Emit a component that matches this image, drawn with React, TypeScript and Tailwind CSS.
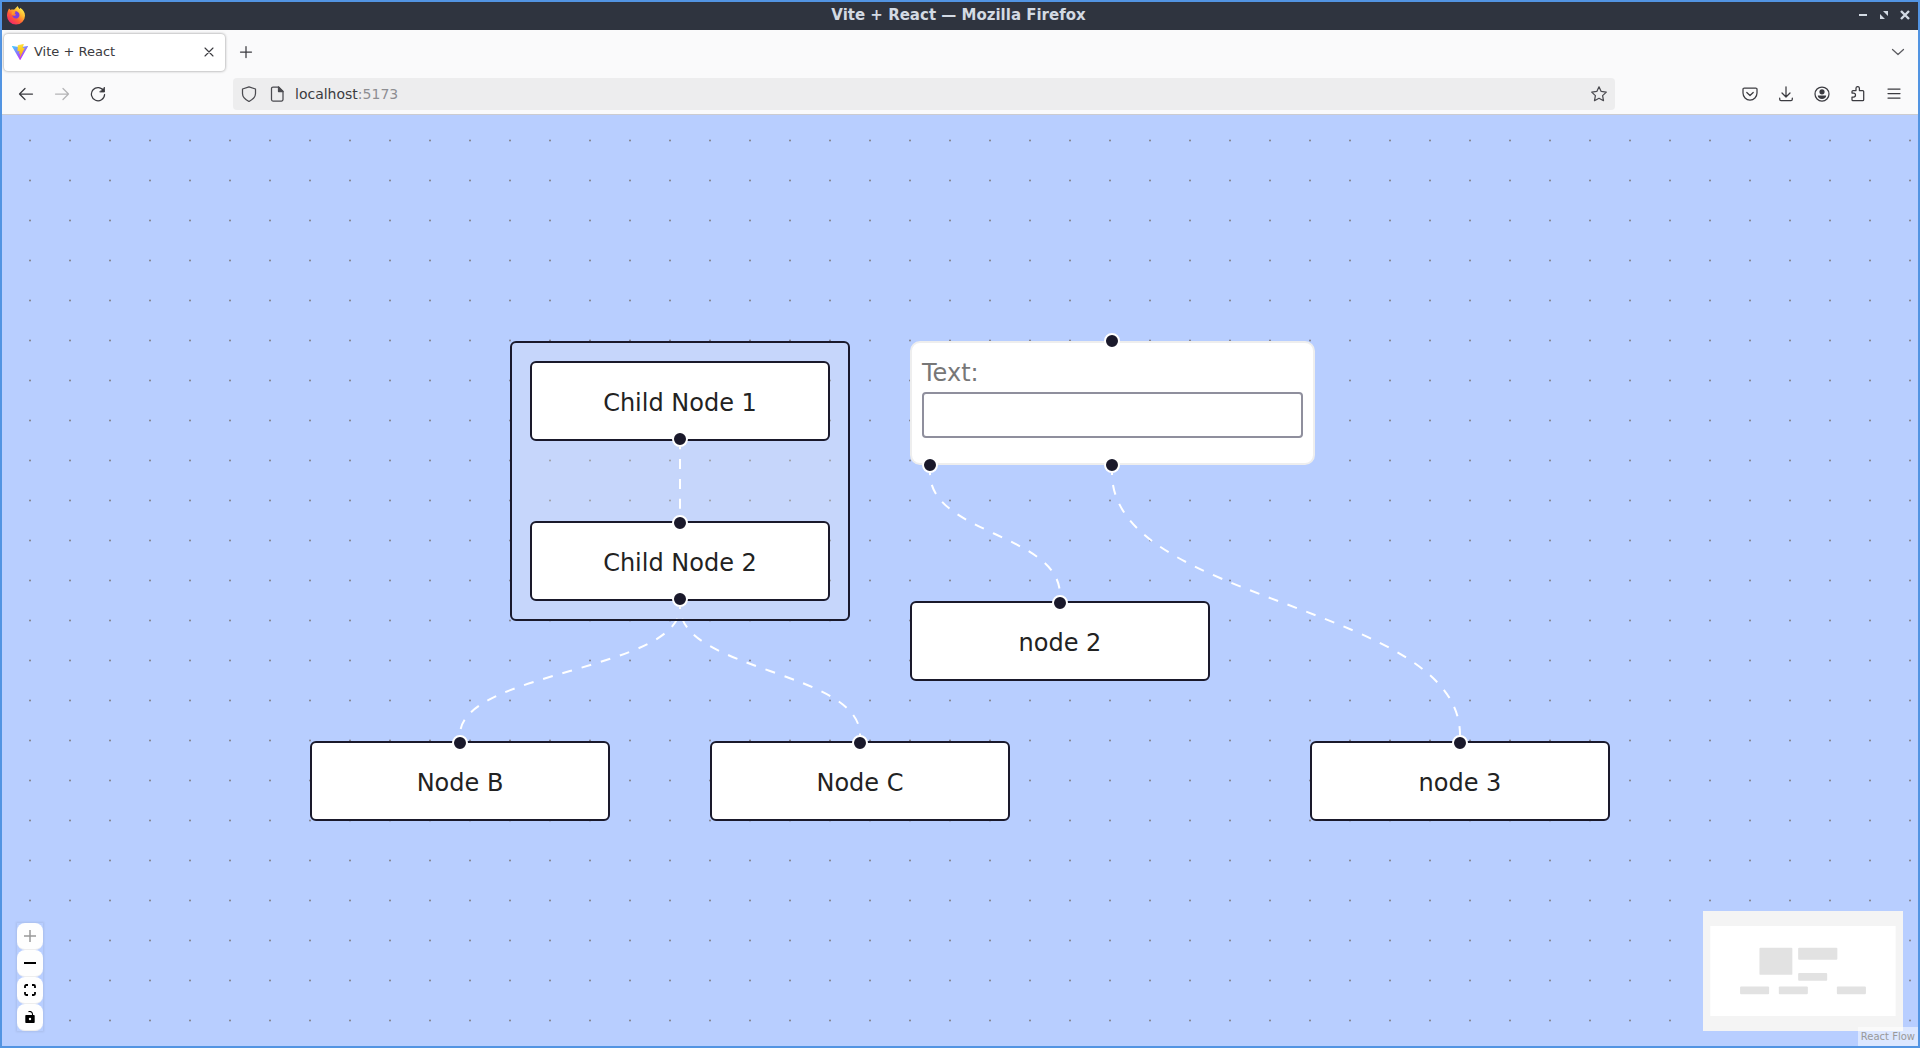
import React from "react";

type Handle = { x: number; y: number };
type FlowNode = { id: string; label: string; x: number; y: number; handles: Handle[] };
type Edge = { from: Handle; to: Handle };

const NODES: FlowNode[] = [
  { id: "child-1", label: "Child Node 1", x: 528, y: 246, handles: [{ x: 150, y: 78 }] },
  { id: "child-2", label: "Child Node 2", x: 528, y: 406, handles: [{ x: 150, y: 2 }, { x: 150, y: 78 }] },
  { id: "node-b", label: "Node B", x: 308, y: 626, handles: [{ x: 150, y: 2 }] },
  { id: "node-c", label: "Node C", x: 708, y: 626, handles: [{ x: 150, y: 2 }] },
  { id: "node-2", label: "node 2", x: 908, y: 486, handles: [{ x: 150, y: 2 }] },
  { id: "node-3", label: "node 3", x: 1308, y: 626, handles: [{ x: 150, y: 2 }] },
];

const LOWER_EDGES: Edge[] = [
  { from: { x: 678, y: 492 }, to: { x: 458, y: 620 } },
  { from: { x: 678, y: 492 }, to: { x: 858, y: 620 } },
  { from: { x: 928, y: 358 }, to: { x: 1058, y: 480 } },
  { from: { x: 1110, y: 358 }, to: { x: 1458, y: 620 } },
];

const GROUP_EDGES: Edge[] = [{ from: { x: 678, y: 332 }, to: { x: 678, y: 400 } }];

const MINIMAP_RECTS = [
  { x: 508, y: 226, w: 340, h: 280 },
  { x: 908, y: 226, w: 405, h: 124 },
  { x: 908, y: 486, w: 300, h: 80 },
  { x: 308, y: 626, w: 300, h: 80 },
  { x: 708, y: 626, w: 300, h: 80 },
  { x: 1308, y: 626, w: 300, h: 80 },
];

function edgePath({ from, to }: Edge) {
  const mid = (from.y + to.y) / 2;
  return `M${from.x},${from.y} C${from.x},${mid} ${to.x},${mid} ${to.x},${to.y}`;
}

function Edges({ edges }: { edges: Edge[] }) {
  return (
    <svg className="pointer-events-none absolute inset-0 h-full w-full" fill="none" stroke="#fff" strokeWidth="2" strokeDasharray="10" strokeDashoffset="8">
      {edges.map((e) => (
        <path key={edgePath(e)} d={edgePath(e)} />
      ))}
    </svg>
  );
}

function HandleDot({ x, y }: Handle) {
  return (
    <span
      className="absolute size-4 -translate-x-1/2 -translate-y-1/2 rounded-full border-2 border-white bg-[#1a192b]"
      style={{ left: x, top: y }}
    />
  );
}

function NodeBox({ node }: { node: FlowNode }) {
  return (
    <div className="absolute" style={{ left: node.x, top: node.y }}>
      <div className="flex h-20 w-[300px] items-center justify-center rounded-md border-2 border-[#1a192b] bg-white pt-[3px] text-2xl text-[#222]">
        {node.label}
      </div>
      {node.handles.map((h) => (
        <HandleDot key={h.y} {...h} />
      ))}
    </div>
  );
}

function TextNode() {
  return (
    <div className="absolute top-[226px] left-[908px]">
      <div className="flex h-[124px] w-[405px] flex-col rounded-[10px] border-2 border-[#eee] bg-white px-2.5 pt-2.5">
        <label htmlFor="text" className="h-[39px] text-2xl leading-10 text-[#777]">
          Text:
        </label>
        <input id="text" name="text" className="h-[46px] w-full rounded-[4px] border-2 border-[#8f8f9d] bg-white px-1 text-2xl outline-none" />
      </div>
      <HandleDot x={202} y={0} />
      <HandleDot x={20} y={124} />
      <HandleDot x={202} y={124} />
    </div>
  );
}

function FirefoxLogo() {
  return (
    <svg viewBox="0 0 20 20" className="size-5">
      <defs>
        <linearGradient id="fx-body" x1="0.85" y1="0.1" x2="0.2" y2="0.95">
          <stop offset="0" stopColor="#fff44f" />
          <stop offset="0.35" stopColor="#ffb02e" />
          <stop offset="0.65" stopColor="#ff5a36" />
          <stop offset="1" stopColor="#f0246e" />
        </linearGradient>
      </defs>
      <path
        fill="url(#fx-body)"
        d="M3 3.4c.7.5 1.2 1 1.5 1.6 1.2-.6 2.5-.6 3.5-.2C9 3.8 10.3 2 11.9.9c.1 1.5 1 2.4 2 3.2.2-.5.2-.9.1-1.4 3.2 1.8 5 4.7 5 8A9 9 0 0 1 10 19.6 9 9 0 0 1 1 10.7C1 8 1.8 5.500 3 3.4Z"
      />
      <path fill="#ff9a2a" d="M6 7c1.5-1.5 4-1.6 5.6-.6l-2.3 1.3c-.3.7-1.6 1-2 1.2-.3.3.1 1.2.1 1.2L5.6 9.6Z" />
      <path fill="#7a3fe0" d="M8.5 8.2c1-.5 1-1.2.7-2 2.6 0 4.5 1.9 4.3 4.2-.2 2.2-2.2 3.3-4 3.1-2-.2-3.2-1.7-3.2-3.2 1 .8 2 .7 3 .3.8-.4.6-1.3-.8-2.4Z" />
    </svg>
  );
}

function ViteLogo() {
  return (
    <svg viewBox="0 0 32 32" className="size-4">
      <defs>
        <linearGradient id="vite-v" x1="0" y1="0" x2="0.55" y2="0.9">
          <stop offset="0" stopColor="#41d1ff" />
          <stop offset="1" stopColor="#bd34fe" />
        </linearGradient>
        <linearGradient id="vite-bolt" x1="0.4" y1="0" x2="0.6" y2="1">
          <stop offset="0" stopColor="#ffea83" />
          <stop offset="0.1" stopColor="#ffdd35" />
          <stop offset="1" stopColor="#ffa800" />
        </linearGradient>
      </defs>
      <path fill="url(#vite-v)" d="m31.9 5-15 26.6a.8.8 0 0 1-1.4 0L.1 5A.8.8 0 0 1 1 3.8L16.1 6.5h.3L31 3.8a.8.8 0 0 1 .9 1.2Z" />
      <path fill="url(#vite-bolt)" d="M23 0 12 2.2a.4.4 0 0 0-.4.4l-.6 11.5c0 .3.2.5.5.4l3-.7c.3-.1.6.2.5.5l-.9 4.5c-.1.3.2.6.5.5l1.9-.6c.3-.1.6.2.5.5l-1.5 7c-.1.4.5.7.7.3l9.3-18.600c.2-.2-.1-.6-.4-.5l-3.2.6c-.3.1-.6-.2-.5-.5L23.5.5A.4.4 0 0 0 23 0Z" />
    </svg>
  );
}

function Icon({ children }: { children: React.ReactNode }) {
  return (
    <svg viewBox="0 0 16 16" className="size-4" fill="none" stroke="currentColor" strokeWidth="1.25" strokeLinecap="round" strokeLinejoin="round">
      {children}
    </svg>
  );
}

function ToolButton({ label, children, disabled }: { label: string; children: React.ReactNode; disabled?: boolean }) {
  return (
    <button type="button" aria-label={label} disabled={disabled} className="flex size-9 items-center justify-center text-[#3b3b40] disabled:text-[#b4b4b6]">
      {children}
    </button>
  );
}

function TitleBar() {
  return (
    <header className="flex h-7 shrink-0 items-center bg-[#2f343f] pb-0.5 text-[#d3dae3]">
      <div className="flex flex-1 items-center pl-1">
        <FirefoxLogo />
      </div>
      <h1 className="text-[15px] font-bold">Vite + React — Mozilla Firefox</h1>
      <div className="flex flex-1 items-center justify-end gap-[9px] pr-[7px]">
        <button type="button" aria-label="Minimize" className="size-3">
          <svg viewBox="0 0 12 12" className="size-3" fill="currentColor">
            <path d="M2 5h8v2H2z" />
          </svg>
        </button>
        <button type="button" aria-label="Restore" className="size-3">
          <svg viewBox="0 0 12 12" className="size-3" fill="currentColor">
            <path d="M5 2h5v5zM2 5v5h5z" />
          </svg>
        </button>
        <button type="button" aria-label="Close" className="size-3">
          <svg viewBox="0 0 12 12" className="size-3" stroke="currentColor" strokeWidth="2.4">
            <path d="m2 2 8 8M10 2l-8 8" />
          </svg>
        </button>
      </div>
    </header>
  );
}

function TabStrip() {
  return (
    <div className="flex h-11 shrink-0 items-center bg-[#fafafb] pr-2 pl-0.5">
      <div className="flex h-[37px] w-[221px] items-center gap-1.5 rounded bg-white px-2 shadow-[0_0_3px_rgba(0,0,0,0.45)]">
        <ViteLogo />
        <span className="flex-1 text-[13px] text-[#3b3b40]">Vite + React</span>
        <button type="button" aria-label="Close tab" className="text-[#3b3b40]">
          <Icon>
            <path strokeWidth="1.1" d="m4 4 8 8M12 4l-8 8" />
          </Icon>
        </button>
      </div>
      <button type="button" aria-label="New tab" className="ml-[13px] text-[#3b3b40]">
        <Icon>
          <path d="M8 2.5v11M2.5 8h11" />
        </Icon>
      </button>
      <button type="button" aria-label="List all tabs" className="ml-auto p-1 text-[#5b5b60]">
        <Icon>
          <path d="m2.5 5.5 5.5 5 5.5-5" />
        </Icon>
      </button>
    </div>
  );
}

function NavBar() {
  return (
    <div className="flex h-[41px] shrink-0 items-center border-b border-[#ccccd0] bg-[#fafafb] px-1.5">
      <ToolButton label="Back">
        <Icon>
          <path d="M14.5 8h-13M7 2.500 1.500 8 7 13.500" />
        </Icon>
      </ToolButton>
      <ToolButton label="Forward" disabled>
        <Icon>
          <path d="M1.500 8h13M9 2.500 14.500 8 9 13.500" />
        </Icon>
      </ToolButton>
      <ToolButton label="Reload">
        <Icon>
          <path d="M13.800 5A6.600 6.600 0 1 0 14.600 8.500" />
          <path fill="currentColor" d="M14.500 1.500V6H10Z" strokeWidth=".8" />
        </Icon>
      </ToolButton>
      <div className="ml-[117px] flex h-8 flex-1 items-center rounded bg-[#ededee] px-2 text-[#4b4b50]">
        <Icon>
          <path d="M8 .8 14.500 3v4.500c0 3.400-2.500 6-6.500 8-4-2-6.500-4.600-6.500-8V3Z" />
        </Icon>
        <span className="ml-3">
          <Icon>
            <path d="M9.500 1H4a1.500 1.500 0 0 0-1.500 1.500v11A1.500 1.500 0 0 0 4 15h8.500a1.500 1.500 0 0 0 1.500-1.500V5.500Z" />
            <path fill="currentColor" d="M9.500 1v4.500H14Z" />
          </Icon>
        </span>
        <p className="ml-2.5 flex-1 text-sm text-[#8e8e92]">
          <span className="text-[#3b3b40]">localhost</span>:5173
        </p>
        <button type="button" aria-label="Bookmark this page">
          <Icon>
            <path d="m8 .8 2.200 4.600 5.100.7-3.700 3.500.9 5.100L8 12.300l-4.500 2.400.9-5.100L.7 6.100l5.100-.7Z" />
          </Icon>
        </button>
      </div>
      <div className="ml-[117px] flex items-center">
        <ToolButton label="Save to Pocket">
          <Icon>
            <path d="M2.300 2h11.400a1.300 1.300 0 0 1 1.300 1.300V7a7 7 0 0 1-14 0V3.300A1.300 1.300 0 0 1 2.300 2Z" />
            <path d="m4.800 6.500 3.200 3 3.200-3" />
          </Icon>
        </ToolButton>
        <ToolButton label="Downloads">
          <Icon>
            <path d="M8 .8v10M4 7l4 4 4-4M1.700 12v1.300c0 .8.500 1.300 1.300 1.300h10c.8 0 1.300-.5 1.300-1.300V12" />
          </Icon>
        </ToolButton>
        <ToolButton label="Account">
          <Icon>
            <circle cx="8" cy="8" r="7" />
            <circle cx="8" cy="5.800" r="2.600" fill="currentColor" stroke="none" />
            <path fill="currentColor" stroke="none" d="M3.800 9.500h8.400c0 2-1.800 3.500-4.200 3.500S3.800 11.500 3.800 9.500Z" />
          </Icon>
        </ToolButton>
        <ToolButton label="Extensions">
          <Icon>
            <path d="M2 7V5.500c0-.6.4-1 1-1h3V2.300a1.500 1.500 0 0 1 3.400 0v2.200h3.300c.6 0 1 .4 1 1v8.200c0 .6-.4 1-1 1H3c-.6 0-1-.4-1-1V11h1.500a1.800 1.800 0 0 0 0-4Z" />
          </Icon>
        </ToolButton>
        <ToolButton label="Menu">
          <Icon>
            <path d="M2 3h12M2 7.500h12M2 12h12" />
          </Icon>
        </ToolButton>
      </div>
    </div>
  );
}

function ControlButton({ label, children, disabled }: { label: string; children: React.ReactNode; disabled?: boolean }) {
  return (
    <button type="button" aria-label={label} disabled={disabled} className="flex h-[27px] w-[26px] items-center justify-center rounded-lg border-b border-[#eee] bg-[#fefefe]">
      {children}
    </button>
  );
}

function Controls() {
  return (
    <div className="absolute bottom-[15px] left-[15px] flex flex-col shadow-[0_0_2px_1px_rgba(0,0,0,0.08)]">
      <ControlButton label="zoom in" disabled>
        <svg viewBox="0 0 12 12" className="size-3" stroke="#999" strokeWidth="1.5">
          <path d="M6 0v12M0 6h12" />
        </svg>
      </ControlButton>
      <ControlButton label="zoom out">
        <svg viewBox="0 0 12 12" className="size-3">
          <path d="M0 5h12v2H0z" />
        </svg>
      </ControlButton>
      <ControlButton label="fit view">
        <svg viewBox="0 0 12 12" className="size-3" fill="none" stroke="#000" strokeWidth="1.8">
          <path d="M1 4V2.200A1.200 1.200 0 0 1 2.200 1H4M8 1h1.800A1.200 1.200 0 0 1 11 2.200V4M11 8v1.800A1.200 1.200 0 0 1 9.800 11H8M4 11H2.200A1.200 1.200 0 0 1 1 9.800V8" />
        </svg>
      </ControlButton>
      <ControlButton label="toggle interactivity">
        <svg viewBox="0 0 12 12" className="size-3">
          <path fillRule="evenodd" d="M2.300 4h7.400c.6 0 1 .4 1 1v6c0 .6-.4 1-1 1H2.300c-.6 0-1-.4-1-1V5c0-.6.4-1 1-1ZM6 6.800a1.200 1.200 0 1 0 0 2.400 1.200 1.200 0 0 0 0-2.400Z" />
          <path d="M4.500.7C6.500-.2 8.800 1.200 8.500 4" fill="none" stroke="#000" strokeWidth="1.1" />
        </svg>
      </ControlButton>
    </div>
  );
}

function MiniMap() {
  return (
    <svg viewBox="-75 -154 2066 1240" className="absolute right-[15px] bottom-[15px] h-[120px] w-[200px] bg-white" role="img" aria-label="Mini map">
      {MINIMAP_RECTS.map((r) => (
        <rect key={`${r.x}-${r.y}`} x={r.x} y={r.y} width={r.w} height={r.h} rx="10" fill="#e2e2e2" />
      ))}
      <path fillRule="evenodd" fill="#f0f0f0" fillOpacity="0.7" d="M-75-154h2066v1240H-75ZM0 0v931h1916V0Z" />
    </svg>
  );
}

function FlowCanvas() {
  return (
    <main className="relative flex-1 overflow-hidden bg-[#b8ceff]">
      <svg className="absolute inset-0 h-full w-full" aria-hidden="true">
        <defs>
          <pattern id="dots" x="8" y="5" width="40" height="40" patternUnits="userSpaceOnUse">
            <circle cx="20" cy="20.5" r="1" fill="#81818a" />
          </pattern>
        </defs>
        <rect width="100%" height="100%" fill="url(#dots)" />
      </svg>
      <Edges edges={LOWER_EDGES} />
      <div className="absolute top-[226px] left-[508px] h-[280px] w-[340px] rounded-md border-2 border-[#1a192b] bg-[#f0f0f0]/25" />
      <Edges edges={GROUP_EDGES} />
      {NODES.map((n) => (
        <NodeBox key={n.id} node={n} />
      ))}
      <TextNode />
      <Controls />
      <MiniMap />
      <a href="https://reactflow.dev" className="absolute right-0 bottom-0 bg-white/50 px-[3px] py-0.5 text-[10px] leading-[15px] text-[#999]">
        React Flow
      </a>
    </main>
  );
}

export default function App() {
  return (
    <div className="flex h-screen flex-col border-2 border-[#5294e2] font-['DejaVu_Sans',sans-serif]">
      <TitleBar />
      <TabStrip />
      <NavBar />
      <FlowCanvas />
    </div>
  );
}
